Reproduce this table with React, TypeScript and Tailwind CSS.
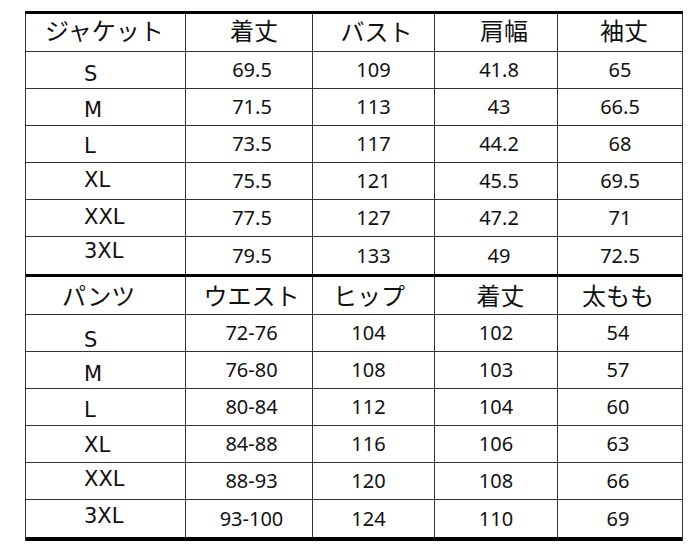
const jacket = {
  title: "ジャケット",
  titleCls: "pl-[19px] pb-[4px]",
  heads: ["着丈", "バスト", "肩幅", "袖丈"],
  headCls: ["pl-[10px] pb-[4px]", "pl-[6px] pb-[2px]", "pl-[16px] pb-[4px]", "pl-[8px] pb-[4px]"],
  colCls: ["pl-[6px]", "", "pl-[6px]", ""],
  sizeCls: ["pt-[10px]", "pt-[7px]", "pt-[5px]", "", "", "pb-[7px]"],
  rows: [
    ["S", "69.5", "109", "41.8", "65"],
    ["M", "71.5", "113", "43", "66.5"],
    ["L", "73.5", "117", "44.2", "68"],
    ["XL", "75.5", "121", "45.5", "69.5"],
    ["XXL", "77.5", "127", "47.2", "71"],
    ["3XL", "79.5", "133", "49", "72.5"],
  ],
};

const pants = {
  title: "パンツ",
  titleCls: "pl-[36px]",
  heads: ["ウエスト", "ヒップ", "着丈", "太もも"],
  headCls: ["pl-[5px]", "pr-[9px]", "pl-[9px]", "pr-[4px]"],
  colCls: ["pl-[5px]", "pr-[10px]", "", "pr-[4px]"],
  sizeCls: ["pt-[16px]", "pt-[9px]", "pt-[7px]", "pt-[4px]", "pb-[3px]", "pb-[4px]"],
  rows: [
    ["S", "72-76", "104", "102", "54"],
    ["M", "76-80", "108", "103", "57"],
    ["L", "80-84", "112", "104", "60"],
    ["XL", "84-88", "116", "106", "63"],
    ["XXL", "88-93", "120", "108", "66"],
    ["3XL", "93-100", "124", "110", "69"],
  ],
};

const widths = ["w-[160px]", "w-[127px]", "w-[122px]", "w-[123px]", "flex-1"];

type Section = typeof jacket;

const SizeSection = ({ data, last }: { data: Section; last?: boolean }) => {
  return (
    <>
      <div className="flex h-[38px] border-b border-[#333]">
        <div className={`${widths[0]} border-r border-[#333] flex items-center ${data.titleCls} text-[24px]`}>
          {data.title}
        </div>
        {data.heads.map((h, i) => (
          <div
            key={h}
            className={`${widths[i + 1]} ${i < 3 ? "border-r border-[#333]" : ""} flex items-center justify-center text-[24px] ${data.headCls[i]}`}
          >
            {h}
          </div>
        ))}
      </div>
      {data.rows.map((row, r) => {
        const isEnd = r === data.rows.length - 1;
        const rowCls = isEnd
          ? last
            ? "h-[41px] border-b-4 border-black"
            : "h-[40px] border-b-[3px] border-black"
          : "h-[37px] border-b border-[#333]";
        return (
          <div key={row[0]} className={`flex ${rowCls}`}>
            <div
              className={`${widths[0]} border-r border-[#333] flex items-center pl-[58px] text-[21px] ${data.sizeCls[r]}`}
              style={{ fontFamily: '"DejaVu Sans", sans-serif' }}
            >
              {row[0]}
            </div>
            {row.slice(1).map((v, i) => (
              <div
                key={i}
                className={`${widths[i + 1]} ${i < 3 ? "border-r border-[#333]" : ""} flex items-center justify-center text-[20px] ${data.colCls[i]}`}
              >
                {v}
              </div>
            ))}
          </div>
        );
      })}
    </>
  );
};

export default function App() {
  return (
    <div
      className="w-[699px] h-[550px] bg-white pt-[11px] pl-[25px] text-[#111]"
      style={{ fontFamily: '"Noto Sans", "Noto Sans CJK JP", sans-serif' }}
    >
      <div className="w-[658px] border-x border-[#333] border-t-[3px] border-t-black">
        <SizeSection data={jacket} />
        <SizeSection data={pants} last />
      </div>
    </div>
  );
}
